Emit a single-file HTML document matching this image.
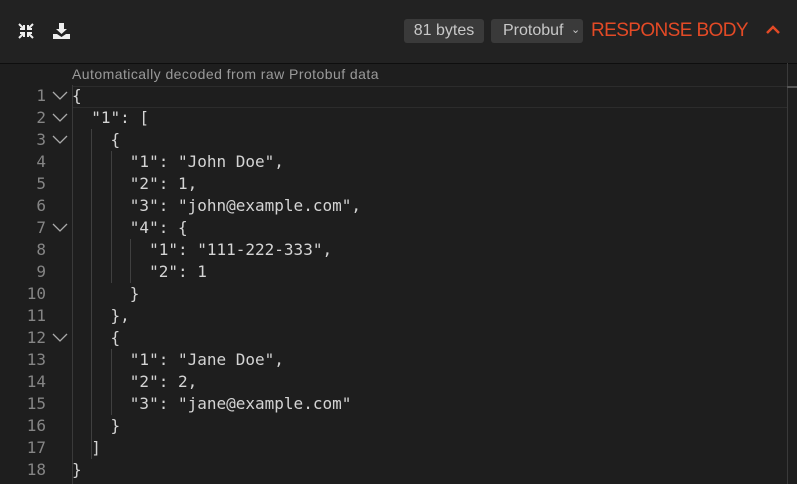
<!DOCTYPE html>
<html><head><style>
body{margin:0;width:797px;height:484px;background:#1e1e1e;overflow:hidden;font-family:"Liberation Sans",sans-serif;position:relative}
.hdr{position:absolute;left:0;top:0;width:797px;height:63px;background:#222;border-bottom:1px solid #0e0e0e}
.pill{position:absolute;top:19px;height:24px;background:#3a3a3a;border-radius:3px;color:#c8c8c8;font-size:16px;line-height:24px}
.title{position:absolute;left:591px;top:19px;color:#e34a26;font-size:19px;line-height:24px;letter-spacing:-0.6px}
.note{position:absolute;left:72px;top:66px;color:#9a9a9a;font-size:14px;letter-spacing:0.45px}
.code{position:absolute;left:0;top:85px;font-family:"DejaVu Sans Mono",monospace;font-size:16px;color:#d4d4d4}
.ln{position:absolute;left:0;width:46px;text-align:right;color:#858585;height:22px;line-height:22px}
.tx{position:absolute;left:72px;white-space:pre;height:22px;line-height:22px}
.fold{position:absolute;left:52px;width:16px;height:22px}
.g{position:absolute;width:1px;background:#404040}
</style></head><body>
<div class="hdr">
<svg style="position:absolute;left:18px;top:23px" width="16" height="16" viewBox="0 0 16 16" fill="none" stroke="#eee" stroke-width="2"><path d="M1 1L6 6M6 2V6H2M15 1L10 6M10 2V6H14M1 15L6 10M6 14V10H2M15 15L10 10M10 14V10H14"/></svg>
<svg style="position:absolute;left:53px;top:23px" width="17" height="16" viewBox="0 0 17 16"><path d="M6 0h5v6h3l-5.5 5L3 6h3z" fill="#eee"/><path d="M0 11h4l4.5 3 4.5-3h4v5H0z" fill="#eee"/></svg>
<div class="pill" style="left:404px;width:80px;text-align:center">81 bytes</div>
<div class="pill" style="left:491px;width:92px;padding-left:12px;box-sizing:border-box">Protobuf <span style="font-size:11px;position:relative;top:-2px;left:3px">&#8964;</span></div>
<div class="title">RESPONSE BODY</div>
<svg style="position:absolute;left:765px;top:24px" width="16" height="12" viewBox="0 0 16 12"><path d="M2 9L8 3L14 9" stroke="#e34a26" stroke-width="2.5" fill="none"/></svg>
</div>
<div class="note">Automatically decoded from raw Protobuf data</div>
<div style="position:absolute;left:72px;top:86px;width:715px;height:20px;border-top:1px solid #2c2c2c;border-bottom:1px solid #2c2c2c"></div>
<div style="position:absolute;left:72px;top:85px;width:1px;height:399px;background:#3a3a3a"></div>
<div style="position:absolute;left:787px;top:63px;width:1px;height:421px;background:#3a3a3a"></div>
<div style="position:absolute;left:787px;top:86px;width:10px;height:2px;background:#555"></div>
<div class="g" style="left:91px;top:129px;height:330px"></div>
<div class="g" style="left:111px;top:151px;height:132px"></div>
<div class="g" style="left:111px;top:349px;height:66px"></div>
<div class="g" style="left:130px;top:239px;height:44px"></div>
<div class="code">
<div class="ln" style="top:0">1</div><div class="tx" style="top:0">{</div>
<div class="ln" style="top:22px">2</div><div class="tx" style="top:22px">  "1": [</div>
<div class="ln" style="top:44px">3</div><div class="tx" style="top:44px">    {</div>
<div class="ln" style="top:66px">4</div><div class="tx" style="top:66px">      "1": "John Doe",</div>
<div class="ln" style="top:88px">5</div><div class="tx" style="top:88px">      "2": 1,</div>
<div class="ln" style="top:110px">6</div><div class="tx" style="top:110px">      "3": "john@example.com",</div>
<div class="ln" style="top:132px">7</div><div class="tx" style="top:132px">      "4": {</div>
<div class="ln" style="top:154px">8</div><div class="tx" style="top:154px">        "1": "111-222-333",</div>
<div class="ln" style="top:176px">9</div><div class="tx" style="top:176px">        "2": 1</div>
<div class="ln" style="top:198px">10</div><div class="tx" style="top:198px">      }</div>
<div class="ln" style="top:220px">11</div><div class="tx" style="top:220px">    },</div>
<div class="ln" style="top:242px">12</div><div class="tx" style="top:242px">    {</div>
<div class="ln" style="top:264px">13</div><div class="tx" style="top:264px">      "1": "Jane Doe",</div>
<div class="ln" style="top:286px">14</div><div class="tx" style="top:286px">      "2": 2,</div>
<div class="ln" style="top:308px">15</div><div class="tx" style="top:308px">      "3": "jane@example.com"</div>
<div class="ln" style="top:330px">16</div><div class="tx" style="top:330px">    }</div>
<div class="ln" style="top:352px">17</div><div class="tx" style="top:352px">  ]</div>
<div class="ln" style="top:374px">18</div><div class="tx" style="top:374px">}</div>
<svg class="fold" style="top:0" viewBox="0 0 16 22"><path d="M1 7l7 7 7-7" stroke="#aaa" stroke-width="1.3" fill="none"/></svg>
<svg class="fold" style="top:22px" viewBox="0 0 16 22"><path d="M1 7l7 7 7-7" stroke="#aaa" stroke-width="1.3" fill="none"/></svg>
<svg class="fold" style="top:44px" viewBox="0 0 16 22"><path d="M1 7l7 7 7-7" stroke="#aaa" stroke-width="1.3" fill="none"/></svg>
<svg class="fold" style="top:132px" viewBox="0 0 16 22"><path d="M1 7l7 7 7-7" stroke="#aaa" stroke-width="1.3" fill="none"/></svg>
<svg class="fold" style="top:242px" viewBox="0 0 16 22"><path d="M1 7l7 7 7-7" stroke="#aaa" stroke-width="1.3" fill="none"/></svg>
</div>
</body></html>
